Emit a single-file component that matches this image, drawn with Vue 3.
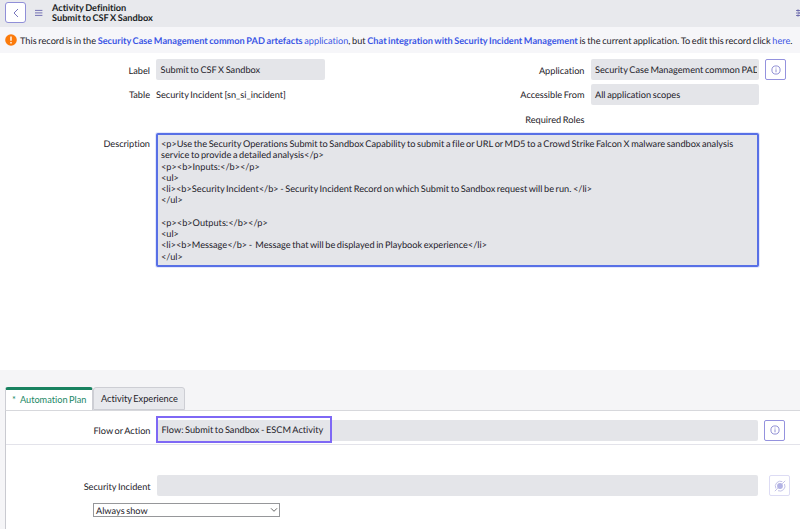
<template>
  <div class="page">
    <header class="header">
      <button class="back" aria-label="Back">
        <svg width="8" height="10" viewBox="0 0 8 10"><path d="M6 1 2 5l4 4" /></svg>
      </button>
      <svg class="menu" width="8" height="8" viewBox="0 0 8 8"><path d="M0 1.4h7.4M0 3.9h7.4M0 6.4h7.4" /></svg>
      <div class="title">
        <div>Activity Definition</div>
        <div>Submit to CSF X Sandbox</div>
      </div>
      <svg class="settings" width="4" height="8" viewBox="0 0 4 8"><path d="M0 1.5h4M0 4h4M0 6.5h4M2 .3v2.4M3 2.8v2.4M2 5.3v2.4" /></svg>
    </header>

    <div class="banner">
      <svg width="12" height="12" viewBox="0 0 12 12">
        <circle cx="6" cy="6" r="5.8" fill="#fb7a0b" />
        <path d="M6 2.4v4.3M6 8.1v1.4" stroke="#fff" stroke-width="1.4" />
      </svg>
      <p>This record is in the <a><b>Security Case Management common PAD artefacts</b> application</a>, but <a><b>Chat integration with Security Incident Management</b></a> is the current application. To edit this record click <a>here</a>.</p>
    </div>

    <section class="form">
      <div class="columns">
        <div class="column">
          <div class="row">
            <label>Label</label>
            <div class="field short">{{ record.label }}</div>
          </div>
          <div class="row second">
            <label>Table</label>
            <span class="plain">{{ record.table }}</span>
          </div>
        </div>
        <div class="column right">
          <div class="row">
            <label>Application</label>
            <div class="field"><span class="clip">{{ record.application }}</span></div>
            <button class="icon-btn" aria-label="Preview application">
              <svg width="10" height="10" viewBox="0 0 10 10"><circle cx="5" cy="5" r="4.1" /><path d="M5 4.3v3M5 2.6v.9" /></svg>
            </button>
          </div>
          <div class="row second">
            <label>Accessible From</label>
            <div class="field scope">{{ record.scope }}</div>
          </div>
          <div class="row second">
            <label>Required Roles</label>
          </div>
        </div>
      </div>
      <div class="description">
        <label>Description</label>
        <div class="textarea">{{ record.description }}</div>
      </div>
    </section>

    <section class="tabs">
      <nav>
        <button
          v-for="tab in tabs"
          :key="tab.name"
          class="tab"
          :class="{ active: tab.name === current }"
          @click="current = tab.name"
        ><i v-if="tab.required">*</i>{{ tab.name }}</button>
      </nav>
      <div class="panel">
        <div class="row flow">
          <label>Flow or Action</label>
          <div class="field wide"><span class="highlight">Flow: Submit to Sandbox - ESCM Activity</span></div>
          <button class="icon-btn" aria-label="Preview flow">
            <svg width="10" height="10" viewBox="0 0 10 10"><circle cx="5" cy="5" r="4.1" /><path d="M5 4.3v3M5 2.6v.9" /></svg>
          </button>
        </div>
        <div class="row incident">
          <label>Security Incident</label>
          <div class="field wide"></div>
          <button class="icon-btn disabled" aria-label="Data picker">
            <svg width="12" height="12" viewBox="0 0 12 12">
              <circle cx="6" cy="6" r="2.9" class="dot" />
              <path d="M1.9 8.5A5 5 0 0 1 8.3 1.6M10.5 4A5 5 0 0 1 4 10.7M.8 11.2l3-3M8.2 3.8l3-3" />
            </svg>
          </button>
        </div>
        <div class="select">
          <span>Always show</span>
          <svg width="8" height="6" viewBox="0 0 8 6"><path d="M1 1.3 4 4.3 7 1.3" /></svg>
        </div>
      </div>
    </section>
  </div>
</template>

<script setup>
import { ref } from "vue";

const record = {
  label: "Submit to CSF X Sandbox",
  table: "Security Incident [sn_si_incident]",
  application: "Security Case Management common PAD",
  scope: "All application scopes",
  description: `<p>Use the Security Operations Submit to Sandbox Capability to submit a file or URL or MD5 to a Crowd Strike Falcon X malware sandbox analysis
service to provide a detailed analysis</p>
<p><b>Inputs:</b></p>
<ul>
<li><b>Security Incident</b> - Security Incident Record on which Submit to Sandbox request will be run. </li>
</ul>

<p><b>Outputs:</b></p>
<ul>
<li><b>Message</b> -  Message that will be displayed in Playbook experience</li>
</ul>`,
};

const tabs = [
  { name: "Automation Plan", required: true },
  { name: "Activity Experience", required: false },
];
const current = ref("Automation Plan");
</script>

<style>
body { background: #fff; overflow: hidden; }
</style>

<style scoped>
* { box-sizing: border-box; }
.page { width: 800px; height: 529px; overflow: hidden; display: flex; flex-direction: column; font: 9.2px/12px Lato, sans-serif; word-spacing: -.75px; color: #1e2229; text-rendering: geometricPrecision; font-variant-ligatures: none; }
button { font: inherit; word-spacing: inherit; padding: 0; color: inherit; }
svg { display: block; flex: none; fill: none; }

.header { height: 27px; flex: none; display: flex; align-items: center; padding-left: 5px; background: #e8e9ed; }
.back { width: 21px; height: 21px; margin-top: -2px; display: grid; place-items: center; background: #fff; border: 1px solid #908fd8; border-radius: 3px; }
.back svg { stroke: #7775bd; stroke-width: 1; }
.menu { margin: -2px 0 0 9px; stroke: #7573b5; stroke-width: 1; }
.title { margin: -1px 0 0 9px; font-weight: 700; line-height: 10px; color: #1b1e24; }
.settings { margin: -2px 0 0 auto; stroke: #5d5aa5; stroke-width: .8; }

.banner { height: 26px; flex: none; display: flex; align-items: center; gap: 3px; padding-left: 5px; background: #f6f6f9; white-space: nowrap; }
.banner p { margin: 2px 0 0; word-spacing: -.67px; }
.banner a { color: #3c57e5; }

.form { height: 317px; flex: none; padding-top: 6px; }
.columns { display: flex; }
.column { width: 434px; display: flex; flex-direction: column; gap: 4px; }
.row { height: 21px; display: flex; align-items: center; }
.row label { width: 150px; padding-top: 2px; text-align: right; margin-right: 6px; }
.second label, .plain { padding-top: 1px; }
.right { width: 366px; }
.right .row label { width: 150.5px; }
.right .field { width: 168.5px; }
.field { height: 21px; padding: 1px 2px 0 4.5px; display: flex; align-items: center; background: #e4e5e9; border-radius: 2px; white-space: nowrap; }
.field.scope { padding-top: 0; }
.clip { overflow: hidden; }
.short { width: 168.5px; }
.icon-btn { width: 21px; height: 21px; margin-left: 6px; display: grid; place-items: center; flex: none; background: #fff; border: 1px solid #9492de; border-radius: 2px; }
.icon-btn svg { stroke: #8583cf; stroke-width: .9; }

.description { display: flex; margin-top: 3px; }
.description label { width: 150px; margin: 5px 6px 0 0; text-align: right; }
.textarea { width: 603px; height: 134px; padding: 3px; background: #e4e5e9; border: 2px solid #5870e6; border-radius: 2px; box-shadow: 0 0 0 1px #e4e8fc; line-height: 11.25px; white-space: pre; }

.tabs { flex: 1; padding: 17px 0 0 5px; background: #f5f5f7; display: flex; flex-direction: column; }
.tabs nav { height: 23px; display: flex; }
.tab { height: 23px; padding: 1px 6.5px 0; background: #e8e9ed; border: 1px solid #cdced4; border-radius: 3px 3px 0 0; white-space: nowrap; }
.tab.active { padding: 0 6px; background: #fff; color: #218766; border-top: 3px solid #198260; border-bottom: 0; }
.tab i { font-style: normal; margin-right: 4px; }
.panel { flex: 1; background: #fff; border-top: 1px solid #d7d8dc; border-left: 1px solid #c9cad0; }
.panel .row label { width: 144.5px; margin-right: 6.5px; }
.wide { width: 601px; }
.flow { height: 34px; padding-top: 5px; border-bottom: 1px solid #e3e3ea; }
.flow .field { padding-top: 0; }
.highlight { height: 27px; flex: none; display: flex; align-items: center; margin: -1px 0 0 -6px; padding: 1px 7px 0 4px; border: 2px solid #7e68f5; }
.incident { margin-top: 30px; }
.disabled { margin-left: 11px; border-color: #dddcf4; }
.disabled svg { stroke: #bcbbe4; }
.disabled .dot { fill: #b3b3e4; stroke: none; }
.select { width: 187px; height: 14px; margin: 7px 0 0 87px; padding: 0 1px 0 2px; display: flex; align-items: center; justify-content: space-between; border: 1px solid #96979a; }
.select span { padding-top: 1px; }
.select svg { stroke: #666; stroke-width: 1; }
</style>
